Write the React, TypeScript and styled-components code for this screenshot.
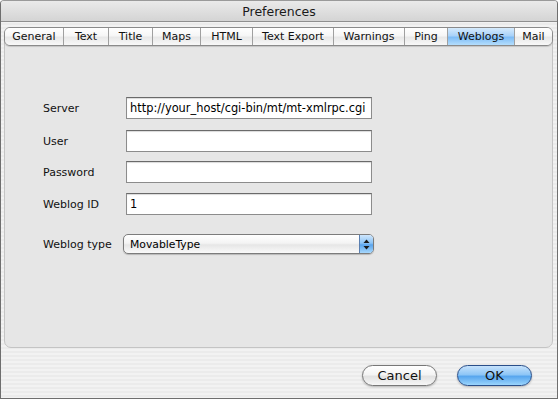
import React from 'react';
import styled, { createGlobalStyle } from 'styled-components';

const Global = createGlobalStyle`
  html, body {
    margin: 0;
    padding: 0;
    background: #fff;
  }
  * {
    box-sizing: border-box;
  }
`;

const Window = styled.div`
  width: 558px;
  height: 399px;
  display: flex;
  flex-direction: column;
  border: 1px solid #6e6e6e;
  border-top-color: #9a9a9a;
  border-radius: 4px 4px 0 0;
  overflow: hidden;
  font-family: 'DejaVu Sans', 'Liberation Sans', sans-serif;
  font-size: 11px;
  color: #000;
  background: repeating-linear-gradient(
    to bottom,
    #f2f2f2 0px,
    #f2f2f2 2px,
    #ebebeb 2px,
    #ebebeb 4px
  );
`;

const TitleBar = styled.div`
  height: 21px;
  flex-shrink: 0;
  display: flex;
  align-items: center;
  justify-content: center;
  font-size: 12.5px;
  color: #1a1a1a;
  background: linear-gradient(to bottom, #eaeaea, #d4d4d4);
  border-bottom: 1px solid #8f8f8f;
`;

const Body = styled.div`
  flex: 1;
  display: flex;
  flex-direction: column;
  padding: 5px 4px 0 3px;
`;

const TabBar = styled.div`
  display: flex;
  align-self: center;
  height: 19px;
  margin-bottom: -9px;
  position: relative;
  z-index: 1;
  border: 1px solid #8a8a8a;
  border-radius: 6px;
  overflow: hidden;
  box-shadow: 0 1px 1px rgba(0, 0, 0, 0.15);
`;

const Tab = styled.div<{ $active?: boolean; $w: number }>`
  width: ${(p) => p.$w}px;
  display: flex;
  align-items: center;
  justify-content: center;
  font-size: 11px;
  color: #111;
  border-left: 1px solid #a0a0a0;
  background: ${(p) =>
    p.$active
      ? 'linear-gradient(to bottom, #d6ebfd 0%, #a9d2f9 45%, #7ebcf6 55%, #b4defd 100%)'
      : 'linear-gradient(to bottom, #ffffff 0%, #f6f6f6 45%, #e8e8e8 55%, #f8f8f8 100%)'};
  &:first-child {
    border-left: none;
  }
`;

const Panel = styled.div`
  height: 311px;
  background: #e6e6e6;
  border: 1px solid #c4c4c4;
  border-radius: 0 0 7px 7px;
  padding: 59px 0 0 38px;
  display: flex;
  flex-direction: column;
`;

const Row = styled.div<{ $top?: number }>`
  display: flex;
  align-items: center;
  height: 22px;
  margin-top: ${(p) => p.$top ?? 0}px;
`;

const Label = styled.div`
  width: 83px;
  flex-shrink: 0;
  font-size: 11px;
  color: #111;
`;

const Input = styled.div`
  width: 246px;
  height: 22px;
  background: #fff;
  border: 1px solid #8c8c8c;
  border-top-color: #6a6a6a;
  box-shadow: inset 0 1px 1px rgba(0, 0, 0, 0.15);
  padding: 0 0 0 3px;
  display: flex;
  align-items: center;
  font-size: 11.4px;
  white-space: nowrap;
  overflow: hidden;
`;

const Select = styled.div`
  margin-left: -3px;
  width: 251px;
  height: 20px;
  display: flex;
  align-items: center;
  border: 1px solid #7c7c7c;
  border-radius: 5px;
  background: linear-gradient(to bottom, #ffffff 0%, #f4f4f4 45%, #e6e6e6 55%, #fafafa 100%);
  box-shadow: 0 1px 1px rgba(0, 0, 0, 0.2);
  overflow: hidden;
`;

const SelectText = styled.div`
  flex: 1;
  padding-left: 6px;
  font-size: 10.8px;
`;

const Stepper = styled.div`
  width: 14px;
  height: 100%;
  display: flex;
  align-items: center;
  justify-content: center;
  border-left: 1px solid #5a7fb0;
  background: linear-gradient(to bottom, #cfe6fc 0%, #8cc4f6 45%, #5aa4ec 55%, #a8d8fc 100%);
`;

const Footer = styled.div`
  flex: 1;
  display: flex;
  justify-content: flex-end;
  align-items: center;
  gap: 20px;
  padding: 5px 21px 0 0;
`;

const Button = styled.div<{ $primary?: boolean }>`
  width: 75px;
  height: 21px;
  display: flex;
  align-items: center;
  justify-content: center;
  border-radius: 11px;
  font-size: 13px;
  color: #111;
  border: 1px solid ${(p) => (p.$primary ? '#2a4f8a' : '#777')};
  background: ${(p) =>
    p.$primary
      ? 'linear-gradient(to bottom, #c6e2fc 0%, #8ec6f6 45%, #58a6ee 55%, #9ad4fc 100%)'
      : 'linear-gradient(to bottom, #ffffff 0%, #f4f4f4 45%, #e2e2e2 55%, #f6f6f6 100%)'};
  box-shadow: 0 1px 2px rgba(0, 0, 0, 0.25);
`;

const tabs: [string, number][] = [
  ['General', 58],
  ['Text', 45],
  ['Title', 44],
  ['Maps', 48],
  ['HTML', 52],
  ['Text Export', 81],
  ['Warnings', 71],
  ['Ping', 43],
  ['Weblogs', 67],
  ['Mail', 38],
];

const App = () => (
  <Window>
    <Global />
    <TitleBar>Preferences</TitleBar>
    <Body>
      <TabBar>
        {tabs.map(([name, w]) => (
          <Tab key={name} $w={w} $active={name === 'Weblogs'}>
            {name}
          </Tab>
        ))}
      </TabBar>
      <Panel>
        <Row>
          <Label>Server</Label>
          <Input>http://your_host/cgi-bin/mt/mt-xmlrpc.cgi</Input>
        </Row>
        <Row $top={11}>
          <Label>User</Label>
          <Input />
        </Row>
        <Row $top={9}>
          <Label>Password</Label>
          <Input />
        </Row>
        <Row $top={10}>
          <Label>Weblog ID</Label>
          <Input>1</Input>
        </Row>
        <Row $top={18}>
          <Label>Weblog type</Label>
          <Select>
            <SelectText>MovableType</SelectText>
            <Stepper>
              <svg width="7" height="11" viewBox="0 0 7 11">
                <path d="M3.5 0.5 L6.5 4 L0.5 4 Z" fill="#1a1a1a" />
                <path d="M3.5 10.5 L6.5 7 L0.5 7 Z" fill="#1a1a1a" />
              </svg>
            </Stepper>
          </Select>
        </Row>
      </Panel>
      <Footer>
        <Button>Cancel</Button>
        <Button $primary>OK</Button>
      </Footer>
    </Body>
  </Window>
);

export default App;
